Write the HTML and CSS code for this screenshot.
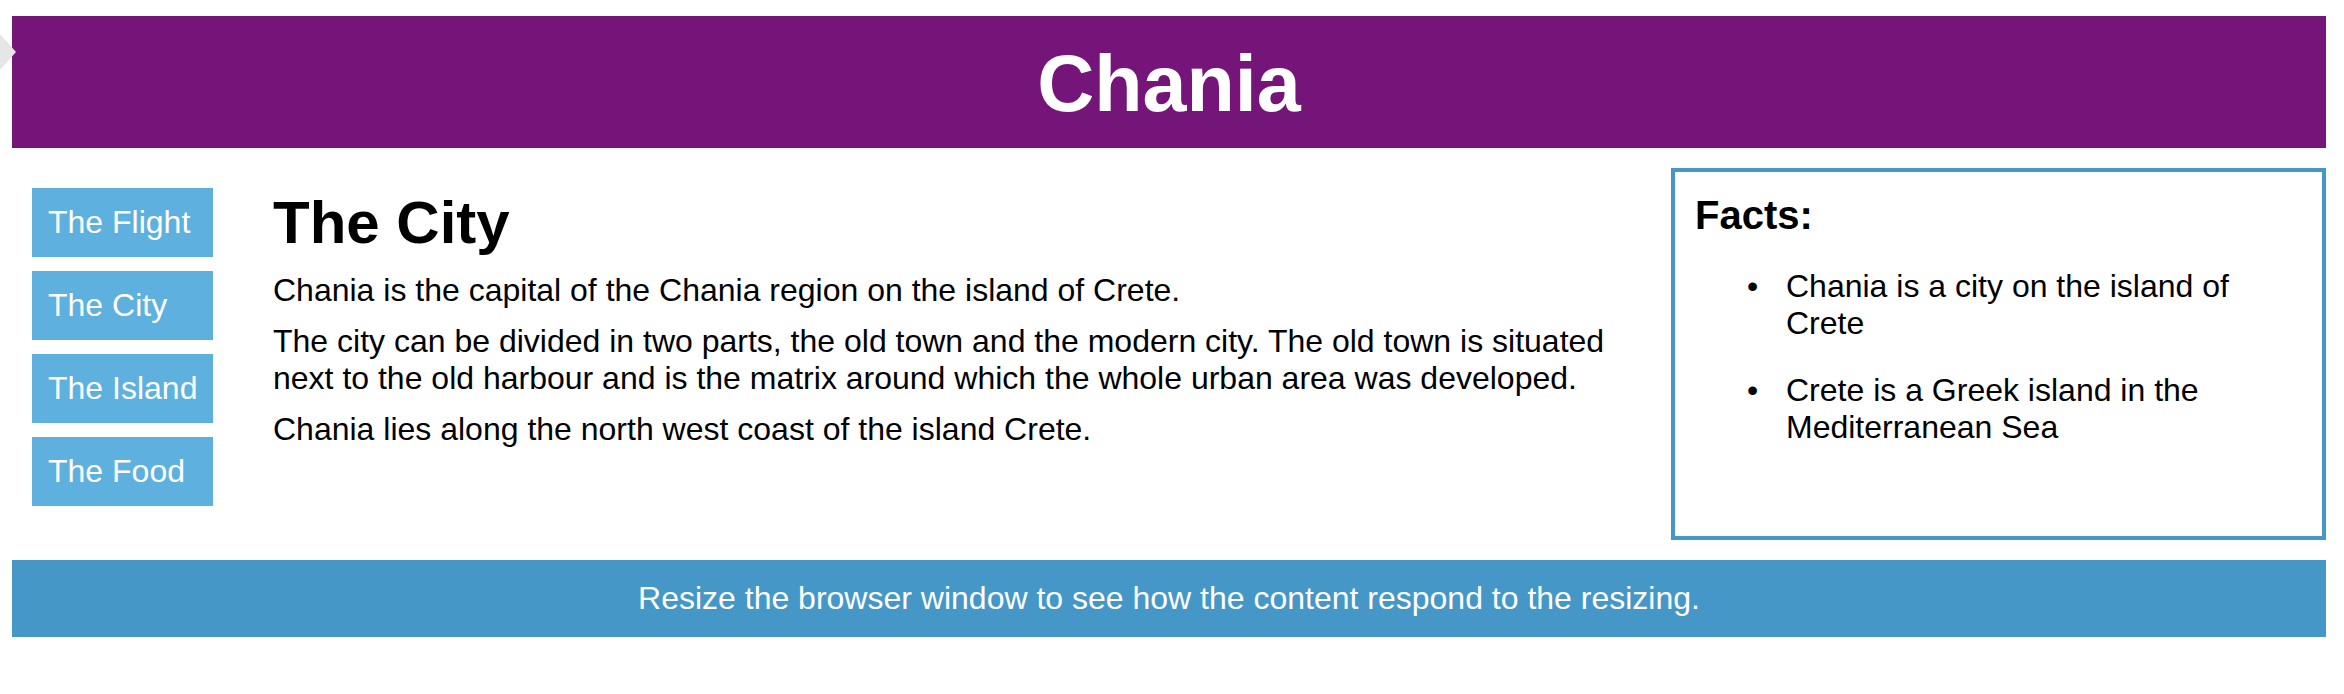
FILE: index.html
```html
<!DOCTYPE html>
<html lang="en">
<head>
<meta charset="utf-8">
<title>Chania</title>
<link rel="stylesheet" href="styles.css">
</head>
<body>
<svg class="edge-handle" width="18" height="80" viewBox="0 0 18 80" aria-hidden="true"><polygon points="0,34 16,52 0,70" fill="#e6e6e7"/></svg>
<header class="header">
  <h1 class="header-title">Chania</h1>
</header>
<div class="row">
  <nav class="menu">
    <ul class="menu-list">
      <li class="menu-item">The Flight</li>
      <li class="menu-item">The City</li>
      <li class="menu-item">The Island</li>
      <li class="menu-item">The Food</li>
    </ul>
  </nav>
  <main class="main">
    <h1 class="main-title">The City</h1>
    <p class="text">Chania is the capital of the Chania region on the island of Crete.</p>
    <p class="text">The city can be divided in two parts, the old town and the modern city. The old town is situated next to the old harbour and is the matrix around which the whole urban area was developed.</p>
    <p class="text">Chania lies along the north west coast of the island Crete.</p>
  </main>
  <aside class="facts">
    <h2 class="facts-title">Facts:</h2>
    <ul class="facts-list">
      <li class="facts-item">Chania is a city on the island of Crete</li>
      <li class="facts-item">Crete is a Greek island in the Mediterranean Sea</li>
    </ul>
  </aside>
</div>
<footer class="footer">
  <p class="footer-text">Resize the browser window to see how the content respond to the resizing.</p>
</footer>
</body>
</html>
```

FILE: styles.css
```css
* {
  box-sizing: border-box;
}

body {
  margin: 0;
  padding: 16px 18px 0 12px;
  font-family: "Liberation Sans", Arial, Helvetica, sans-serif;
  font-size: 32px;
  line-height: 37px;
  color: #000;
  background: #fff;
}

.edge-handle {
  position: absolute;
  left: 0;
  top: 0;
}

.header {
  background-color: #761579;
  color: #fff;
  padding: 22px 0 18px;
  text-align: center;
}

.header-title {
  margin: 0;
  font-size: 79px;
  line-height: 92px;
  font-weight: bold;
}

.row {
  display: flex;
  margin-top: 20px;
}

.menu {
  flex: 0 0 auto;
  padding: 20px 0 20px 20px;
}

.menu-list {
  list-style: none;
  margin: 0;
  padding: 0;
}

.menu-item {
  width: 181px;
  padding: 16px;
  margin-bottom: 14px;
  background-color: #5eb0df;
  color: #fff;
  white-space: nowrap;
}

.main {
  flex: 1 1 auto;
  min-width: 0;
  margin-left: 60px;
  padding-top: 19px;
}

.main-title {
  margin: 0 0 13px;
  font-size: 60px;
  line-height: 72px;
  font-weight: bold;
}

.text {
  margin: 0 0 14px;
}

.facts {
  flex: 0 0 655px;
  margin-left: 20px;
  border: 4px solid #4597c8;
  padding: 20px;
}

.facts-title {
  margin: 0 0 30px;
  font-size: 40px;
  line-height: 46px;
  font-weight: bold;
}

.facts-list {
  list-style: none;
  margin: 0;
  padding-left: 91px;
}

.facts-item {
  margin-bottom: 30px;
}

.facts-item::before {
  content: "\2022";
  display: inline-block;
  width: 39px;
  margin-left: -39px;
}

.footer {
  margin-top: 20px;
  background-color: #4497c7;
  color: #fff;
  padding: 20px;
  text-align: center;
}

.footer-text {
  margin: 0;
}
```
